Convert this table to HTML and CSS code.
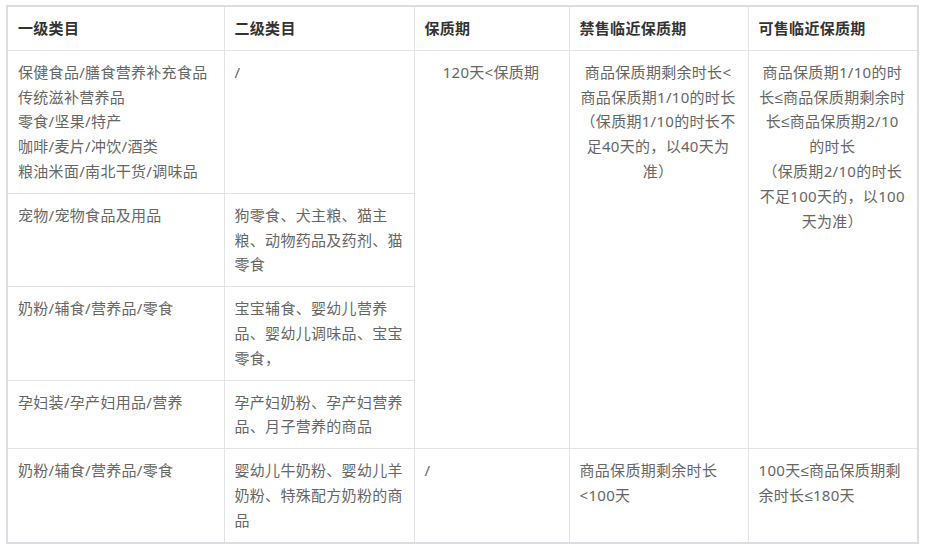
FILE: index.html
```html
<!DOCTYPE html>
<html lang="zh-CN">
<head>
<meta charset="utf-8">
<title>临近保质期规则</title>
<link rel="stylesheet" href="styles.css">
</head>
<body>
<div class="page">
  <table class="rules">
    <colgroup>
      <col class="c1"><col class="c2"><col class="c3"><col class="c4"><col class="c5">
    </colgroup>
    <thead>
      <tr>
        <th>一级类目</th>
        <th>二级类目</th>
        <th>保质期</th>
        <th>禁售临近保质期</th>
        <th>可售临近保质期</th>
      </tr>
    </thead>
    <tbody>
      <tr>
        <td>保健食品/膳食营养补充食品<br>传统滋补营养品<br>零食/坚果/特产<br>咖啡/麦片/冲饮/酒类<br>粮油米面/南北干货/调味品</td>
        <td>/</td>
        <td class="center" rowspan="4">120天&lt;保质期</td>
        <td class="center" rowspan="4">商品保质期剩余时长&lt;商品保质期1/10的时长<br>（保质期1/10的时长不足40天的，以40天为准）</td>
        <td class="center" rowspan="4">商品保质期1/10的时长≤商品保质期剩余时长≤商品保质期2/10的时长<br>（保质期2/10的时长不足100天的，以100天为准）</td>
      </tr>
      <tr>
        <td>宠物/宠物食品及用品</td>
        <td>狗零食、犬主粮、猫主粮、动物药品及药剂、猫零食</td>
      </tr>
      <tr>
        <td>奶粉/辅食/营养品/零食</td>
        <td>宝宝辅食、婴幼儿营养品、婴幼儿调味品、宝宝零食，</td>
      </tr>
      <tr>
        <td>孕妇装/孕产妇用品/营养</td>
        <td>孕产妇奶粉、孕产妇营养品、月子营养的商品</td>
      </tr>
      <tr>
        <td>奶粉/辅食/营养品/零食</td>
        <td>婴幼儿牛奶粉、婴幼儿羊奶粉、特殊配方奶粉的商品</td>
        <td>/</td>
        <td>商品保质期剩余时长&lt;100天</td>
        <td>100天≤商品保质期剩余时长≤180天</td>
      </tr>
    </tbody>
  </table>
</div>
</body>
</html>
```

FILE: styles.css
```css
html, body {
  margin: 0;
  padding: 0;
  background: #ffffff;
}

.page {
  padding: 5px 0 0 6px;
  font-family: "Noto Sans", "Liberation Sans", "Noto Sans CJK SC", sans-serif;
}

.rules {
  width: 911px;
  border-collapse: collapse;
  table-layout: fixed;
  border: 2px solid #dcdce2;
  font-size: 15px;
  letter-spacing: 0.3px;
  line-height: 24.8px;
}

.c1 { width: 217px; }
.c2 { width: 190px; }
.c3 { width: 155px; }
.c4 { width: 179px; }
.c5 { width: 170px; }

.rules th,
.rules td {
  border: 1px solid #e3e3e6;
  padding: 9px 10px 9px;
  vertical-align: top;
  text-align: left;
}

.rules th {
  color: #333333;
  font-weight: 700;
}

.rules td {
  color: #666666;
}

.rules td.center {
  text-align: center;
  padding-right: 11px;
}
```
